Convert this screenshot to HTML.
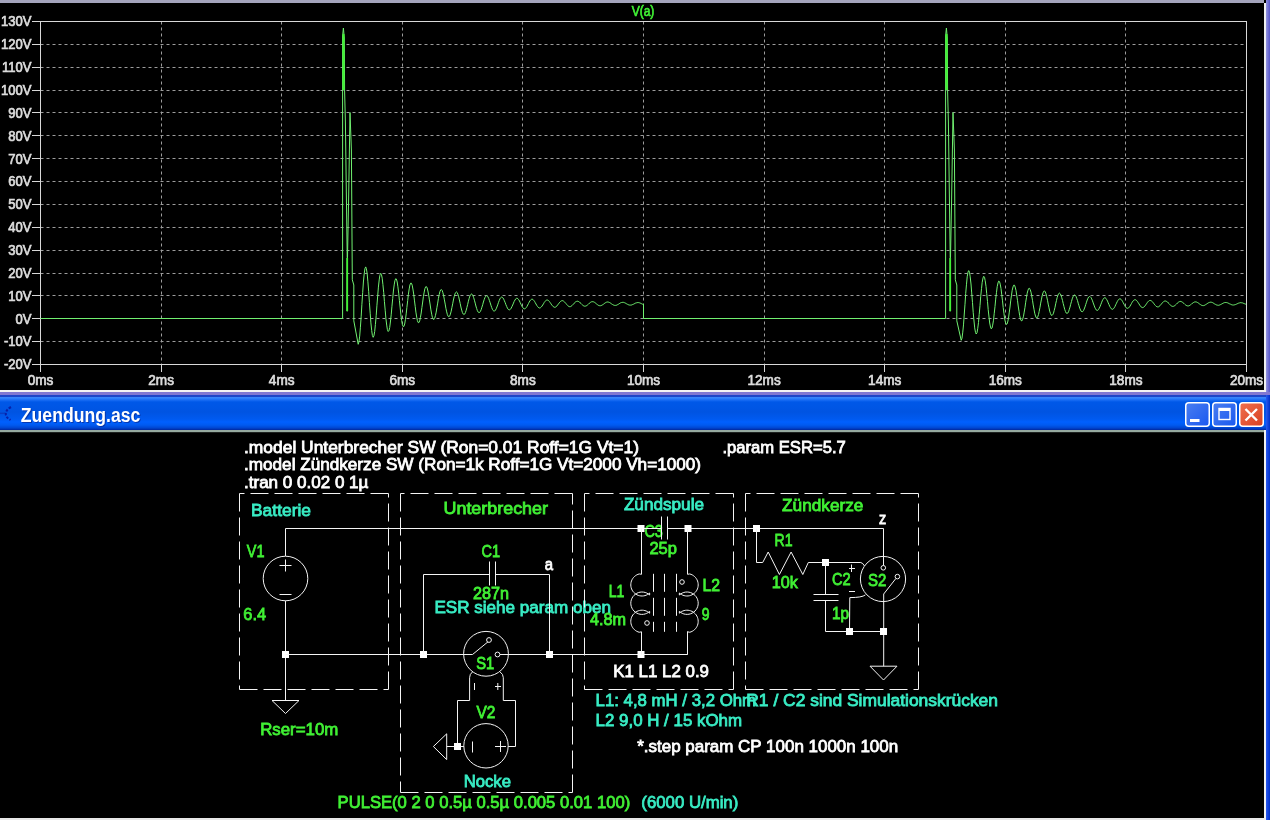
<!DOCTYPE html>
<html><head><meta charset="utf-8"><style>
html,body{margin:0;padding:0;background:#000;width:1270px;height:820px;overflow:hidden}
svg{display:block;position:absolute;left:0;top:0;will-change:transform}
.ax{font-family:"Liberation Sans",sans-serif;font-size:14px;fill:#dcdcdc;stroke:#dcdcdc;stroke-width:0.7px}
.st{font-family:"Liberation Sans",sans-serif;font-weight:normal;stroke-width:0.8px}
.tt{font-family:"Liberation Sans",sans-serif;font-weight:bold;font-size:19.5px;fill:#fff}
</style></head><body>
<svg width="1270" height="820" viewBox="0 0 1270 820">
<defs>
<linearGradient id="tbar" x1="0" y1="0" x2="0" y2="1">
<stop offset="0" stop-color="#1e46c8"/><stop offset="0.045" stop-color="#1e46c8"/><stop offset="0.075" stop-color="#3c8cff"/><stop offset="0.11" stop-color="#2878fa"/><stop offset="0.2" stop-color="#0058e8"/><stop offset="0.49" stop-color="#0054e2"/><stop offset="0.69" stop-color="#005af0"/><stop offset="0.77" stop-color="#0060ff"/><stop offset="0.86" stop-color="#005af0"/><stop offset="0.94" stop-color="#0046d2"/><stop offset="1" stop-color="#0028a0"/>
</linearGradient>
<linearGradient id="rstrip" x1="0" y1="0" x2="1" y2="0"><stop offset="0" stop-color="#9494e0"/><stop offset="1" stop-color="#5656c8"/></linearGradient>
<linearGradient id="rstrip2" x1="0" y1="0" x2="1" y2="0"><stop offset="0" stop-color="#2858f0"/><stop offset="1" stop-color="#0030c8"/></linearGradient>
<linearGradient id="btnb" x1="0" y1="0" x2="1" y2="1"><stop offset="0" stop-color="#4a7ef0"/><stop offset="1" stop-color="#1a58f0"/></linearGradient>
<linearGradient id="btnr" x1="0" y1="0" x2="1" y2="1"><stop offset="0" stop-color="#f07050"/><stop offset="1" stop-color="#d84020"/></linearGradient>
</defs>
<rect x="0" y="0" width="1270" height="820" fill="#000"/>
<rect x="0" y="0" width="1264" height="3" fill="#a4a4bc"/>
<rect x="1264" y="3" width="2" height="389" fill="#f0f0f0"/>
<rect x="1266" y="0" width="4" height="395" fill="url(#rstrip)"/>
<rect x="0" y="390" width="1266" height="2" fill="#f4f4f4"/>
<rect x="0" y="392" width="1270" height="3" fill="#8278d2"/>
<rect x="0" y="395" width="1270" height="35" fill="url(#tbar)"/>
<rect x="0" y="430" width="1266" height="2.2" fill="#96aaa0"/>
<rect x="1264" y="430" width="2" height="390" fill="#f0f0f0"/>
<rect x="1266" y="395" width="4" height="425" fill="url(#rstrip2)"/>
<rect x="0" y="818" width="1266" height="2" fill="#e8e8e8"/>
<line x1="40.5" y1="341.5" x2="1246.5" y2="341.5" stroke="#9c9c9c" stroke-width="1" stroke-dasharray="3 3"/>
<line x1="40.5" y1="318.5" x2="1246.5" y2="318.5" stroke="#9c9c9c" stroke-width="1" stroke-dasharray="3 3"/>
<line x1="40.5" y1="295.5" x2="1246.5" y2="295.5" stroke="#9c9c9c" stroke-width="1" stroke-dasharray="3 3"/>
<line x1="40.5" y1="273.5" x2="1246.5" y2="273.5" stroke="#9c9c9c" stroke-width="1" stroke-dasharray="3 3"/>
<line x1="40.5" y1="250.5" x2="1246.5" y2="250.5" stroke="#9c9c9c" stroke-width="1" stroke-dasharray="3 3"/>
<line x1="40.5" y1="227.5" x2="1246.5" y2="227.5" stroke="#9c9c9c" stroke-width="1" stroke-dasharray="3 3"/>
<line x1="40.5" y1="204.5" x2="1246.5" y2="204.5" stroke="#9c9c9c" stroke-width="1" stroke-dasharray="3 3"/>
<line x1="40.5" y1="181.5" x2="1246.5" y2="181.5" stroke="#9c9c9c" stroke-width="1" stroke-dasharray="3 3"/>
<line x1="40.5" y1="158.5" x2="1246.5" y2="158.5" stroke="#9c9c9c" stroke-width="1" stroke-dasharray="3 3"/>
<line x1="40.5" y1="135.5" x2="1246.5" y2="135.5" stroke="#9c9c9c" stroke-width="1" stroke-dasharray="3 3"/>
<line x1="40.5" y1="112.5" x2="1246.5" y2="112.5" stroke="#9c9c9c" stroke-width="1" stroke-dasharray="3 3"/>
<line x1="40.5" y1="90.5" x2="1246.5" y2="90.5" stroke="#9c9c9c" stroke-width="1" stroke-dasharray="3 3"/>
<line x1="40.5" y1="67.5" x2="1246.5" y2="67.5" stroke="#9c9c9c" stroke-width="1" stroke-dasharray="3 3"/>
<line x1="40.5" y1="44.5" x2="1246.5" y2="44.5" stroke="#9c9c9c" stroke-width="1" stroke-dasharray="3 3"/>
<line x1="161.5" y1="21.5" x2="161.5" y2="364.5" stroke="#9c9c9c" stroke-width="1" stroke-dasharray="3 3"/>
<line x1="281.5" y1="21.5" x2="281.5" y2="364.5" stroke="#9c9c9c" stroke-width="1" stroke-dasharray="3 3"/>
<line x1="402.5" y1="21.5" x2="402.5" y2="364.5" stroke="#9c9c9c" stroke-width="1" stroke-dasharray="3 3"/>
<line x1="522.5" y1="21.5" x2="522.5" y2="364.5" stroke="#9c9c9c" stroke-width="1" stroke-dasharray="3 3"/>
<line x1="643.5" y1="21.5" x2="643.5" y2="364.5" stroke="#9c9c9c" stroke-width="1" stroke-dasharray="3 3"/>
<line x1="764.5" y1="21.5" x2="764.5" y2="364.5" stroke="#9c9c9c" stroke-width="1" stroke-dasharray="3 3"/>
<line x1="884.5" y1="21.5" x2="884.5" y2="364.5" stroke="#9c9c9c" stroke-width="1" stroke-dasharray="3 3"/>
<line x1="1005.5" y1="21.5" x2="1005.5" y2="364.5" stroke="#9c9c9c" stroke-width="1" stroke-dasharray="3 3"/>
<line x1="1125.5" y1="21.5" x2="1125.5" y2="364.5" stroke="#9c9c9c" stroke-width="1" stroke-dasharray="3 3"/>
<rect x="40.5" y="21.5" width="1206.0" height="343.0" fill="none" stroke="#d8d8d8" stroke-width="1"/>
<line x1="32" y1="364.5" x2="40.5" y2="364.5" stroke="#d8d8d8" stroke-width="1"/>
<text x="31.5" y="369.3" text-anchor="end" class="ax" textLength="27.5" lengthAdjust="spacingAndGlyphs">-20V</text>
<line x1="32" y1="341.5" x2="40.5" y2="341.5" stroke="#d8d8d8" stroke-width="1"/>
<text x="31.5" y="346.4" text-anchor="end" class="ax" textLength="27.5" lengthAdjust="spacingAndGlyphs">-10V</text>
<line x1="32" y1="318.5" x2="40.5" y2="318.5" stroke="#d8d8d8" stroke-width="1"/>
<text x="31.5" y="323.6" text-anchor="end" class="ax" textLength="15.9" lengthAdjust="spacingAndGlyphs">0V</text>
<line x1="32" y1="295.5" x2="40.5" y2="295.5" stroke="#d8d8d8" stroke-width="1"/>
<text x="31.5" y="300.7" text-anchor="end" class="ax" textLength="23.2" lengthAdjust="spacingAndGlyphs">10V</text>
<line x1="32" y1="273.5" x2="40.5" y2="273.5" stroke="#d8d8d8" stroke-width="1"/>
<text x="31.5" y="277.8" text-anchor="end" class="ax" textLength="23.2" lengthAdjust="spacingAndGlyphs">20V</text>
<line x1="32" y1="250.5" x2="40.5" y2="250.5" stroke="#d8d8d8" stroke-width="1"/>
<text x="31.5" y="255.0" text-anchor="end" class="ax" textLength="23.2" lengthAdjust="spacingAndGlyphs">30V</text>
<line x1="32" y1="227.5" x2="40.5" y2="227.5" stroke="#d8d8d8" stroke-width="1"/>
<text x="31.5" y="232.1" text-anchor="end" class="ax" textLength="23.2" lengthAdjust="spacingAndGlyphs">40V</text>
<line x1="32" y1="204.5" x2="40.5" y2="204.5" stroke="#d8d8d8" stroke-width="1"/>
<text x="31.5" y="209.2" text-anchor="end" class="ax" textLength="23.2" lengthAdjust="spacingAndGlyphs">50V</text>
<line x1="32" y1="181.5" x2="40.5" y2="181.5" stroke="#d8d8d8" stroke-width="1"/>
<text x="31.5" y="186.4" text-anchor="end" class="ax" textLength="23.2" lengthAdjust="spacingAndGlyphs">60V</text>
<line x1="32" y1="158.5" x2="40.5" y2="158.5" stroke="#d8d8d8" stroke-width="1"/>
<text x="31.5" y="163.5" text-anchor="end" class="ax" textLength="23.2" lengthAdjust="spacingAndGlyphs">70V</text>
<line x1="32" y1="135.5" x2="40.5" y2="135.5" stroke="#d8d8d8" stroke-width="1"/>
<text x="31.5" y="140.6" text-anchor="end" class="ax" textLength="23.2" lengthAdjust="spacingAndGlyphs">80V</text>
<line x1="32" y1="112.5" x2="40.5" y2="112.5" stroke="#d8d8d8" stroke-width="1"/>
<text x="31.5" y="117.8" text-anchor="end" class="ax" textLength="23.2" lengthAdjust="spacingAndGlyphs">90V</text>
<line x1="32" y1="90.5" x2="40.5" y2="90.5" stroke="#d8d8d8" stroke-width="1"/>
<text x="31.5" y="94.9" text-anchor="end" class="ax" textLength="30.4" lengthAdjust="spacingAndGlyphs">100V</text>
<line x1="32" y1="67.5" x2="40.5" y2="67.5" stroke="#d8d8d8" stroke-width="1"/>
<text x="31.5" y="72.0" text-anchor="end" class="ax" textLength="29.4" lengthAdjust="spacingAndGlyphs">110V</text>
<line x1="32" y1="44.5" x2="40.5" y2="44.5" stroke="#d8d8d8" stroke-width="1"/>
<text x="31.5" y="49.2" text-anchor="end" class="ax" textLength="30.4" lengthAdjust="spacingAndGlyphs">120V</text>
<line x1="32" y1="21.5" x2="40.5" y2="21.5" stroke="#d8d8d8" stroke-width="1"/>
<text x="31.5" y="26.3" text-anchor="end" class="ax" textLength="30.4" lengthAdjust="spacingAndGlyphs">130V</text>
<line x1="40.5" y1="364.5" x2="40.5" y2="372" stroke="#d8d8d8" stroke-width="1"/>
<text x="40.5" y="385" text-anchor="middle" class="ax" textLength="25.7" lengthAdjust="spacingAndGlyphs">0ms</text>
<line x1="161.5" y1="364.5" x2="161.5" y2="372" stroke="#d8d8d8" stroke-width="1"/>
<text x="161.1" y="385" text-anchor="middle" class="ax" textLength="25.7" lengthAdjust="spacingAndGlyphs">2ms</text>
<line x1="281.5" y1="364.5" x2="281.5" y2="372" stroke="#d8d8d8" stroke-width="1"/>
<text x="281.7" y="385" text-anchor="middle" class="ax" textLength="25.7" lengthAdjust="spacingAndGlyphs">4ms</text>
<line x1="402.5" y1="364.5" x2="402.5" y2="372" stroke="#d8d8d8" stroke-width="1"/>
<text x="402.3" y="385" text-anchor="middle" class="ax" textLength="25.7" lengthAdjust="spacingAndGlyphs">6ms</text>
<line x1="522.5" y1="364.5" x2="522.5" y2="372" stroke="#d8d8d8" stroke-width="1"/>
<text x="522.9" y="385" text-anchor="middle" class="ax" textLength="25.7" lengthAdjust="spacingAndGlyphs">8ms</text>
<line x1="643.5" y1="364.5" x2="643.5" y2="372" stroke="#d8d8d8" stroke-width="1"/>
<text x="643.5" y="385" text-anchor="middle" class="ax" textLength="33.2" lengthAdjust="spacingAndGlyphs">10ms</text>
<line x1="764.5" y1="364.5" x2="764.5" y2="372" stroke="#d8d8d8" stroke-width="1"/>
<text x="764.1" y="385" text-anchor="middle" class="ax" textLength="33.2" lengthAdjust="spacingAndGlyphs">12ms</text>
<line x1="884.5" y1="364.5" x2="884.5" y2="372" stroke="#d8d8d8" stroke-width="1"/>
<text x="884.7" y="385" text-anchor="middle" class="ax" textLength="33.2" lengthAdjust="spacingAndGlyphs">14ms</text>
<line x1="1005.5" y1="364.5" x2="1005.5" y2="372" stroke="#d8d8d8" stroke-width="1"/>
<text x="1005.3" y="385" text-anchor="middle" class="ax" textLength="33.2" lengthAdjust="spacingAndGlyphs">16ms</text>
<line x1="1125.5" y1="364.5" x2="1125.5" y2="372" stroke="#d8d8d8" stroke-width="1"/>
<text x="1125.9" y="385" text-anchor="middle" class="ax" textLength="33.2" lengthAdjust="spacingAndGlyphs">18ms</text>
<line x1="1246.5" y1="364.5" x2="1246.5" y2="372" stroke="#d8d8d8" stroke-width="1"/>
<text x="1246.5" y="385" text-anchor="middle" class="ax" textLength="33.2" lengthAdjust="spacingAndGlyphs">20ms</text>
<text x="643" y="16" text-anchor="middle" class="ax" style="fill:#40f034;stroke:#40f034" textLength="22.7" lengthAdjust="spacingAndGlyphs">V(a)</text>
<path d="M40.5,318.5 L342.6,318.5 L342.6,36.0 L343.4,28.0 L344.3,38.0 L344.6,91.0 L345.4,122.0 L347.2,257.8 L347.2,311.3 L347.5,257.8 L348.6,200.0 L350.0,112.5 L351.4,150.0 L352.3,279.8 L353.8,285.0 L353.8,320.8 L358.2,344.3 L358.9,342.0 L359.7,336.1 L360.4,327.2 L361.2,316.2 L361.9,304.3 L362.7,292.5 L363.4,282.0 L364.2,273.8 L364.9,268.7 L365.7,266.9 L366.4,268.8 L367.2,273.9 L367.9,281.8 L368.7,291.7 L369.4,302.5 L370.2,313.2 L370.9,322.9 L371.7,330.5 L372.4,335.5 L373.2,337.3 L373.9,335.9 L374.7,331.5 L375.4,324.5 L376.2,315.6 L376.9,305.8 L377.7,296.0 L378.4,287.1 L379.2,279.9 L379.9,275.2 L380.7,273.3 L381.4,274.4 L382.2,278.2 L382.9,284.4 L383.7,292.4 L384.4,301.3 L385.2,310.2 L385.9,318.4 L386.7,325.1 L387.4,329.6 L388.2,331.5 L388.9,330.8 L389.7,327.5 L390.4,322.0 L391.2,314.8 L391.9,306.8 L392.7,298.6 L393.4,291.0 L394.2,284.9 L394.9,280.6 L395.7,278.7 L396.4,279.1 L397.2,282.0 L397.9,286.8 L398.7,293.2 L399.4,300.5 L400.2,308.0 L400.9,314.9 L401.7,320.6 L402.4,324.7 L403.2,326.6 L403.9,326.4 L404.7,324.0 L405.4,319.7 L406.2,313.9 L406.9,307.4 L407.7,300.5 L408.4,294.2 L409.2,288.9 L409.9,285.0 L410.7,283.1 L411.4,283.2 L412.2,285.2 L412.9,289.0 L413.7,294.1 L414.4,300.1 L415.2,306.3 L415.9,312.1 L416.7,317.1 L417.4,320.6 L418.2,322.6 L418.9,322.6 L419.7,320.9 L420.4,317.6 L421.2,313.0 L421.9,307.6 L422.7,302.0 L423.4,296.6 L424.2,292.1 L424.9,288.7 L425.7,286.8 L426.4,286.6 L427.2,288.0 L427.9,291.0 L428.7,295.1 L429.4,299.9 L430.2,305.0 L430.9,309.9 L431.7,314.2 L432.4,317.4 L433.2,319.2 L433.9,319.5 L434.7,318.3 L435.4,315.7 L436.2,312.1 L436.9,307.7 L437.7,303.1 L438.4,298.5 L439.2,294.6 L439.9,291.7 L440.7,289.9 L441.4,289.5 L442.2,290.5 L442.9,292.7 L443.7,296.0 L444.4,299.9 L445.2,304.1 L445.9,308.3 L446.7,311.9 L447.4,314.7 L448.2,316.4 L448.9,316.8 L449.7,316.0 L450.4,314.1 L451.2,311.2 L451.9,307.6 L452.7,303.8 L453.4,300.0 L454.2,296.7 L454.9,294.1 L455.7,292.5 L456.4,291.9 L457.2,292.6 L457.9,294.3 L458.7,296.8 L459.4,300.0 L460.2,303.5 L460.9,307.0 L461.7,310.1 L462.4,312.5 L463.2,314.0 L463.9,314.6 L464.7,314.1 L465.4,312.6 L466.2,310.3 L466.9,307.5 L467.7,304.3 L468.4,301.2 L469.2,298.3 L469.9,296.0 L470.7,294.6 L471.4,294.0 L472.2,294.4 L472.9,295.6 L473.7,297.7 L474.4,300.2 L475.2,303.1 L475.9,306.0 L476.7,308.6 L477.4,310.7 L478.2,312.1 L478.9,312.7 L479.7,312.4 L480.4,311.4 L481.2,309.6 L481.9,307.2 L482.7,304.7 L483.4,302.0 L484.2,299.6 L484.9,297.6 L485.7,296.3 L486.4,295.7 L487.2,295.9 L487.9,296.8 L488.7,298.4 L489.4,300.5 L490.2,302.8 L490.9,305.2 L491.7,307.5 L492.4,309.3 L493.2,310.5 L493.9,311.2 L494.7,311.0 L495.4,310.2 L496.2,308.8 L496.9,307.0 L497.7,304.9 L498.4,302.7 L499.2,300.6 L499.9,298.9 L500.7,297.7 L501.4,297.1 L502.2,297.2 L502.9,297.9 L503.7,299.1 L504.4,300.8 L505.2,302.7 L505.9,304.7 L506.7,306.5 L507.4,308.1 L508.2,309.3 L508.9,309.8 L509.7,309.8 L510.4,309.3 L511.2,308.2 L511.9,306.7 L512.7,305.0 L513.5,303.1 L514.2,301.4 L515.0,300.0 L515.7,298.9 L516.5,298.3 L517.2,298.3 L518.0,298.8 L518.7,299.7 L519.5,301.0 L520.2,302.6 L521.0,304.3 L521.7,305.8 L522.5,307.2 L523.2,308.2 L524.0,308.8 L524.7,308.8 L525.5,308.4 L526.2,307.6 L527.0,306.4 L527.7,305.0 L528.5,303.5 L529.2,302.1 L530.0,300.8 L530.7,299.9 L531.5,299.3 L532.2,299.2 L533.0,299.5 L533.7,300.3 L534.5,301.3 L535.2,302.6 L536.0,304.0 L536.7,305.3 L537.5,306.4 L538.2,307.3 L539.0,307.9 L539.7,308.0 L540.5,307.7 L541.2,307.1 L542.0,306.1 L542.7,305.0 L543.5,303.8 L544.2,302.5 L545.0,301.5 L545.7,300.6 L546.5,300.1 L547.2,300.0 L548.0,300.2 L548.7,300.8 L549.5,301.6 L550.2,302.6 L551.0,303.8 L551.7,304.9 L552.5,305.8 L553.2,306.6 L554.0,307.1 L554.7,307.3 L555.5,307.1 L556.2,306.6 L557.0,305.9 L557.7,304.9 L558.5,303.9 L559.2,302.9 L560.0,302.0 L560.7,301.3 L561.5,300.8 L562.2,300.6 L563.0,300.8 L563.7,301.2 L564.5,301.9 L565.2,302.7 L566.0,303.6 L566.7,304.5 L567.5,305.4 L568.2,306.0 L569.0,306.5 L569.7,306.7 L570.5,306.6 L571.2,306.2 L572.0,305.6 L572.7,304.9 L573.5,304.0 L574.2,303.2 L575.0,302.4 L575.7,301.8 L576.5,301.4 L577.2,301.2 L578.0,301.3 L578.7,301.6 L579.5,302.1 L580.2,302.8 L581.0,303.5 L581.7,304.3 L582.5,305.0 L583.2,305.6 L584.0,306.0 L584.7,306.2 L585.5,306.1 L586.2,305.9 L587.0,305.4 L587.7,304.8 L588.5,304.1 L589.2,303.4 L590.0,302.8 L590.7,302.2 L591.5,301.8 L592.2,301.7 L593.0,301.7 L593.7,301.9 L594.5,302.3 L595.2,302.8 L596.0,303.5 L596.7,304.1 L597.5,304.7 L598.2,305.2 L599.0,305.6 L599.7,305.7 L600.5,305.7 L601.2,305.5 L602.0,305.2 L602.7,304.7 L603.5,304.2 L604.2,303.6 L605.0,303.0 L605.7,302.6 L606.5,302.2 L607.2,302.0 L608.0,302.0 L608.7,302.2 L609.5,302.5 L610.2,302.9 L611.0,303.4 L611.7,304.0 L612.5,304.5 L613.2,304.9 L614.0,305.2 L614.7,305.4 L615.5,305.4 L616.2,305.3 L617.0,305.0 L617.7,304.6 L618.5,304.2 L619.2,303.7 L620.0,303.2 L620.7,302.8 L621.5,302.5 L622.2,302.4 L623.0,302.3 L623.7,302.4 L624.5,302.7 L625.2,303.0 L626.0,303.4 L626.7,303.9 L627.5,304.3 L628.2,304.7 L629.0,304.9 L629.7,305.1 L630.5,305.1 L631.2,305.1 L632.0,304.8 L632.7,304.5 L633.5,304.2 L634.2,303.8 L635.0,303.4 L635.7,303.0 L636.5,302.8 L637.2,302.6 L638.0,302.6 L638.7,302.6 L639.5,302.8 L640.2,303.1 L641.0,303.4 L641.7,303.8 L642.5,304.2 L643.5,304.2 L643.5,318.5 L945.6,318.5 L945.6,36.0 L946.4,28.0 L947.3,38.0 L947.6,91.0 L948.4,122.0 L950.2,257.8 L950.2,311.3 L950.5,257.8 L951.6,200.0 L953.0,112.5 L954.4,150.0 L955.3,279.8 L956.8,285.0 L956.8,320.8 L961.2,340.3 L962.0,338.2 L962.7,332.9 L963.5,324.9 L964.2,315.0 L965.0,304.2 L965.7,293.6 L966.5,284.2 L967.2,276.8 L968.0,272.1 L968.7,270.6 L969.5,272.2 L970.2,276.9 L971.0,284.0 L971.7,292.9 L972.5,302.6 L973.2,312.3 L974.0,321.0 L974.7,327.9 L975.5,332.4 L976.2,334.0 L977.0,332.8 L977.7,328.7 L978.5,322.4 L979.2,314.4 L980.0,305.6 L980.7,296.7 L981.5,288.7 L982.2,282.3 L983.0,278.0 L983.7,276.3 L984.5,277.3 L985.2,280.7 L986.0,286.3 L986.7,293.5 L987.5,301.5 L988.2,309.6 L989.0,317.0 L989.7,323.0 L990.5,327.0 L991.2,328.8 L992.0,328.1 L992.7,325.1 L993.5,320.2 L994.2,313.7 L995.0,306.5 L995.7,299.1 L996.5,292.3 L997.2,286.7 L998.0,282.9 L998.7,281.1 L999.5,281.6 L1000.2,284.1 L1001.0,288.5 L1001.7,294.3 L1002.5,300.8 L1003.2,307.5 L1004.0,313.8 L1004.7,319.0 L1005.5,322.6 L1006.2,324.4 L1007.0,324.1 L1007.7,322.0 L1008.5,318.1 L1009.2,312.9 L1010.0,307.0 L1010.7,300.9 L1011.5,295.1 L1012.2,290.3 L1013.0,286.9 L1013.7,285.2 L1014.5,285.2 L1015.2,287.1 L1016.0,290.5 L1016.7,295.1 L1017.5,300.4 L1018.2,306.0 L1019.0,311.3 L1019.7,315.7 L1020.5,319.0 L1021.2,320.7 L1022.0,320.8 L1022.7,319.2 L1023.5,316.2 L1024.2,312.1 L1025.0,307.3 L1025.7,302.2 L1026.5,297.3 L1027.2,293.2 L1028.0,290.2 L1028.7,288.5 L1029.5,288.3 L1030.2,289.6 L1031.0,292.2 L1031.7,295.9 L1032.5,300.3 L1033.2,304.9 L1034.0,309.3 L1034.7,313.2 L1035.5,316.0 L1036.2,317.7 L1037.0,317.9 L1037.7,316.9 L1038.5,314.6 L1039.2,311.3 L1040.0,307.3 L1040.7,303.1 L1041.5,299.1 L1042.2,295.5 L1043.0,292.9 L1043.7,291.3 L1044.5,290.9 L1045.2,291.8 L1046.0,293.8 L1046.7,296.7 L1047.5,300.3 L1048.2,304.1 L1049.0,307.8 L1049.7,311.1 L1050.5,313.6 L1051.2,315.1 L1052.0,315.5 L1052.7,314.8 L1053.5,313.1 L1054.2,310.5 L1055.0,307.3 L1055.7,303.8 L1056.5,300.4 L1057.2,297.4 L1058.0,295.0 L1058.7,293.6 L1059.5,293.1 L1060.2,293.7 L1061.0,295.2 L1061.7,297.5 L1062.5,300.4 L1063.2,303.5 L1064.0,306.7 L1064.7,309.4 L1065.5,311.6 L1066.2,313.0 L1067.0,313.5 L1067.7,313.1 L1068.5,311.8 L1069.2,309.7 L1070.0,307.1 L1070.7,304.3 L1071.5,301.4 L1072.2,298.9 L1073.0,296.8 L1073.7,295.5 L1074.5,295.0 L1075.2,295.3 L1076.0,296.4 L1076.7,298.3 L1077.5,300.6 L1078.2,303.2 L1079.0,305.8 L1079.7,308.1 L1080.5,310.0 L1081.2,311.3 L1082.0,311.8 L1082.7,311.6 L1083.5,310.6 L1084.2,309.0 L1085.0,306.9 L1085.7,304.6 L1086.5,302.2 L1087.2,300.0 L1088.0,298.2 L1088.7,297.0 L1089.5,296.5 L1090.2,296.7 L1091.0,297.5 L1091.7,298.9 L1092.5,300.8 L1093.2,302.9 L1094.0,305.1 L1094.7,307.1 L1095.5,308.7 L1096.2,309.9 L1097.0,310.4 L1097.7,310.3 L1098.5,309.6 L1099.2,308.3 L1100.0,306.7 L1100.7,304.8 L1101.5,302.8 L1102.2,300.9 L1103.0,299.4 L1103.7,298.3 L1104.5,297.8 L1105.2,297.8 L1106.0,298.4 L1106.7,299.6 L1107.5,301.1 L1108.2,302.8 L1109.0,304.6 L1109.7,306.3 L1110.5,307.7 L1111.2,308.7 L1112.0,309.2 L1112.7,309.3 L1113.5,308.7 L1114.2,307.8 L1115.0,306.4 L1115.7,304.8 L1116.5,303.2 L1117.2,301.7 L1118.0,300.3 L1118.7,299.4 L1119.5,298.9 L1120.2,298.8 L1121.0,299.3 L1121.7,300.1 L1122.5,301.3 L1123.2,302.7 L1124.0,304.2 L1124.7,305.6 L1125.5,306.9 L1126.2,307.8 L1127.0,308.3 L1127.7,308.3 L1128.5,308.0 L1129.2,307.2 L1130.0,306.2 L1130.7,304.9 L1131.5,303.5 L1132.2,302.2 L1133.0,301.1 L1133.7,300.3 L1134.5,299.8 L1135.2,299.7 L1136.0,300.0 L1136.7,300.6 L1137.5,301.6 L1138.2,302.7 L1139.0,303.9 L1139.7,305.1 L1140.5,306.2 L1141.2,307.0 L1142.0,307.5 L1142.7,307.6 L1143.5,307.3 L1144.2,306.8 L1145.0,305.9 L1145.7,304.9 L1146.5,303.8 L1147.2,302.7 L1148.0,301.7 L1148.7,301.0 L1149.5,300.5 L1150.2,300.4 L1151.0,300.6 L1151.7,301.1 L1152.5,301.8 L1153.2,302.7 L1154.0,303.8 L1154.7,304.8 L1155.5,305.6 L1156.2,306.3 L1157.0,306.8 L1157.7,306.9 L1158.5,306.8 L1159.2,306.3 L1160.0,305.7 L1160.7,304.8 L1161.5,303.9 L1162.2,303.0 L1163.0,302.2 L1163.7,301.5 L1164.5,301.1 L1165.2,301.0 L1166.0,301.1 L1166.7,301.5 L1167.5,302.0 L1168.2,302.8 L1169.0,303.6 L1169.7,304.5 L1170.5,305.2 L1171.2,305.8 L1172.0,306.2 L1172.7,306.4 L1173.5,306.3 L1174.2,306.0 L1175.0,305.4 L1175.7,304.8 L1176.5,304.0 L1177.2,303.3 L1178.0,302.6 L1178.7,302.0 L1179.5,301.6 L1180.2,301.4 L1181.0,301.5 L1181.7,301.8 L1182.5,302.3 L1183.2,302.9 L1184.0,303.5 L1184.7,304.2 L1185.5,304.9 L1186.2,305.4 L1187.0,305.8 L1187.7,305.9 L1188.5,305.9 L1189.2,305.7 L1190.0,305.2 L1190.7,304.7 L1191.5,304.1 L1192.2,303.4 L1193.0,302.9 L1193.7,302.4 L1194.5,302.0 L1195.2,301.9 L1196.0,301.9 L1196.7,302.1 L1197.5,302.5 L1198.2,302.9 L1199.0,303.5 L1199.7,304.1 L1200.5,304.6 L1201.2,305.1 L1202.0,305.4 L1202.7,305.6 L1203.5,305.6 L1204.2,305.4 L1205.0,305.1 L1205.7,304.6 L1206.5,304.1 L1207.2,303.6 L1208.0,303.1 L1208.7,302.7 L1209.5,302.4 L1210.2,302.2 L1211.0,302.2 L1211.7,302.3 L1212.5,302.6 L1213.2,303.0 L1214.0,303.5 L1214.7,304.0 L1215.5,304.4 L1216.2,304.8 L1217.0,305.1 L1217.7,305.2 L1218.5,305.3 L1219.2,305.1 L1220.0,304.9 L1220.7,304.5 L1221.5,304.1 L1222.2,303.7 L1223.0,303.3 L1223.7,302.9 L1224.5,302.6 L1225.2,302.5 L1226.0,302.5 L1226.7,302.6 L1227.5,302.8 L1228.2,303.1 L1229.0,303.5 L1229.7,303.9 L1230.5,304.2 L1231.2,304.6 L1232.0,304.8 L1232.7,305.0 L1233.5,305.0 L1234.2,304.9 L1235.0,304.7 L1235.7,304.5 L1236.5,304.1 L1237.2,303.8 L1238.0,303.4 L1238.7,303.1 L1239.5,302.9 L1240.2,302.7 L1241.0,302.7 L1241.7,302.8 L1242.5,302.9 L1243.2,303.2 L1244.0,303.5 L1244.7,303.8 L1245.5,304.1 L1246.0,304.1" fill="none" stroke="#70f070" stroke-width="1" stroke-linejoin="round"/>
<path d="M343.5,34 L343.6,90" stroke="#40f034" stroke-width="2"/>
<path d="M347.2,258 L347.2,311" stroke="#40f034" stroke-width="1.8"/>
<path d="M946.5,34 L946.6,90" stroke="#40f034" stroke-width="2"/>
<path d="M950.2,258 L950.2,311" stroke="#40f034" stroke-width="1.8"/>
<text x="21.8" y="423.2" class="tt" style="fill:#0a2890;opacity:0.7" textLength="119.6" lengthAdjust="spacingAndGlyphs">Zuendung.asc</text>
<text x="20.8" y="422.2" class="tt" textLength="119.6" lengthAdjust="spacingAndGlyphs">Zuendung.asc</text>
<path d="M11,407 Q5.5,410 5.8,414.5 Q6,417.5 10.5,420" fill="none" stroke="#0818a0" stroke-width="2" stroke-dasharray="2.5 1.5" opacity="0.85"/>
<path d="M0,413.3 L5,413.3" stroke="#0a30b0" stroke-width="1.5" opacity="0.6"/>
<rect x="1185.75" y="402.75" width="23.5" height="23.5" rx="3" fill="url(#btnb)" stroke="#fff" stroke-width="1.5"/>
<rect x="1212.75" y="402.75" width="23.5" height="23.5" rx="3" fill="url(#btnb)" stroke="#fff" stroke-width="1.5"/>
<rect x="1239.75" y="402.75" width="23.5" height="23.5" rx="3" fill="url(#btnr)" stroke="#fff" stroke-width="1.5"/>
<rect x="1190" y="419" width="9.5" height="3" fill="#fff"/>
<rect x="1219" y="408.5" width="11" height="11" fill="none" stroke="#fff" stroke-width="1.4"/><rect x="1219" y="408.5" width="11" height="2.5" fill="#fff"/>
<path d="M1245.5,409 L1257,420.5 M1257,409 L1245.5,420.5" stroke="#fff" stroke-width="2.4"/>
<text x="244" y="452.6" fill="#ffffff" stroke="#ffffff" class="st" style="font-size:16.8px" textLength="395" lengthAdjust="spacingAndGlyphs">.model Unterbrecher SW (Ron=0.01 Roff=1G Vt=1)</text>
<text x="244" y="469.6" fill="#ffffff" stroke="#ffffff" class="st" style="font-size:16.8px" textLength="457" lengthAdjust="spacingAndGlyphs">.model Zündkerze SW (Ron=1k Roff=1G Vt=2000 Vh=1000)</text>
<text x="244" y="487.6" fill="#ffffff" stroke="#ffffff" class="st" style="font-size:16.8px" textLength="124.4" lengthAdjust="spacingAndGlyphs">.tran 0 0.02 0 1µ</text>
<text x="722.4" y="452.7" fill="#ffffff" stroke="#ffffff" class="st" style="font-size:16.8px" textLength="123.4" lengthAdjust="spacingAndGlyphs">.param ESR=5.7</text>
<text x="251" y="515.6" fill="#38ecc4" stroke="#38ecc4" class="st" style="font-size:16.8px" textLength="60" lengthAdjust="spacingAndGlyphs">Batterie</text>
<text x="443.5" y="513.6" fill="#40f034" stroke="#40f034" class="st" style="font-size:16.8px" textLength="104.5" lengthAdjust="spacingAndGlyphs">Unterbrecher</text>
<text x="623.9" y="510.3" fill="#38ecc4" stroke="#38ecc4" class="st" style="font-size:16.8px" textLength="80.1" lengthAdjust="spacingAndGlyphs">Zündspule</text>
<text x="782.1" y="511.0" fill="#40f034" stroke="#40f034" class="st" style="font-size:16.8px" textLength="81.3" lengthAdjust="spacingAndGlyphs">Zündkerze</text>
<text x="879" y="523.7" fill="#ffffff" stroke="#ffffff" class="st" style="font-size:16.8px" textLength="7.2" lengthAdjust="spacingAndGlyphs">z</text>
<text x="246.8" y="556.6" fill="#40f034" stroke="#40f034" class="st" style="font-size:16.8px" textLength="17.6" lengthAdjust="spacingAndGlyphs">V1</text>
<text x="243.3" y="620.0" fill="#40f034" stroke="#40f034" class="st" style="font-size:16.8px" textLength="22.8" lengthAdjust="spacingAndGlyphs">6.4</text>
<text x="260.2" y="735.2" fill="#40f034" stroke="#40f034" class="st" style="font-size:16.8px" textLength="78.1" lengthAdjust="spacingAndGlyphs">Rser=10m</text>
<text x="481.4" y="557.2" fill="#40f034" stroke="#40f034" class="st" style="font-size:16.8px" textLength="18.6" lengthAdjust="spacingAndGlyphs">C1</text>
<text x="544.7" y="569.6" fill="#ffffff" stroke="#ffffff" class="st" style="font-size:16.8px" textLength="8.3" lengthAdjust="spacingAndGlyphs">a</text>
<text x="473" y="599.2" fill="#40f034" stroke="#40f034" class="st" style="font-size:16.8px" textLength="36" lengthAdjust="spacingAndGlyphs">287n</text>
<text x="434.4" y="613.2" fill="#38ecc4" stroke="#38ecc4" class="st" style="font-size:16.8px" textLength="176.6" lengthAdjust="spacingAndGlyphs">ESR siehe param oben</text>
<text x="476.3" y="668.6" fill="#40f034" stroke="#40f034" class="st" style="font-size:16.8px" textLength="18" lengthAdjust="spacingAndGlyphs">S1</text>
<text x="476.4" y="718.4" fill="#40f034" stroke="#40f034" class="st" style="font-size:16.8px" textLength="18.9" lengthAdjust="spacingAndGlyphs">V2</text>
<text x="463.7" y="786.7" fill="#38ecc4" stroke="#38ecc4" class="st" style="font-size:16.8px" textLength="47.3" lengthAdjust="spacingAndGlyphs">Nocke</text>
<text x="337.6" y="808.4" fill="#40f034" stroke="#40f034" class="st" style="font-size:16.8px" textLength="292.6" lengthAdjust="spacingAndGlyphs">PULSE(0 2 0 0.5µ 0.5µ 0.005 0.01 100)</text>
<text x="641.3" y="808.4" fill="#38ecc4" stroke="#38ecc4" class="st" style="font-size:16.8px" textLength="97" lengthAdjust="spacingAndGlyphs">(6000 U/min)</text>
<text x="644.4" y="536.5" fill="#40f034" stroke="#40f034" class="st" style="font-size:16.8px" textLength="18.5" lengthAdjust="spacingAndGlyphs">C3</text>
<text x="649.4" y="553.5" fill="#40f034" stroke="#40f034" class="st" style="font-size:16.8px" textLength="27.6" lengthAdjust="spacingAndGlyphs">25p</text>
<text x="608.8" y="596.5" fill="#40f034" stroke="#40f034" class="st" style="font-size:16.8px" textLength="15.6" lengthAdjust="spacingAndGlyphs">L1</text>
<text x="589.9" y="625.2" fill="#40f034" stroke="#40f034" class="st" style="font-size:16.8px" textLength="36.1" lengthAdjust="spacingAndGlyphs">4.8m</text>
<text x="702.4" y="590.7" fill="#40f034" stroke="#40f034" class="st" style="font-size:16.8px" textLength="17.6" lengthAdjust="spacingAndGlyphs">L2</text>
<text x="701.8" y="619.6" fill="#40f034" stroke="#40f034" class="st" style="font-size:16.8px" textLength="7.8" lengthAdjust="spacingAndGlyphs">9</text>
<text x="613.3" y="677.0" fill="#ffffff" stroke="#ffffff" class="st" style="font-size:16.8px" textLength="95.7" lengthAdjust="spacingAndGlyphs">K1 L1 L2 0.9</text>
<text x="595.6" y="705.6" fill="#38ecc4" stroke="#38ecc4" class="st" style="font-size:16.8px">L1: 4,8 mH / 3,2 Ohm</text>
<text x="746.3" y="705.6" fill="#38ecc4" stroke="#38ecc4" class="st" style="font-size:16.8px" textLength="251.7" lengthAdjust="spacingAndGlyphs">R1 / C2 sind Simulationskrücken</text>
<text x="595.6" y="725.5" fill="#38ecc4" stroke="#38ecc4" class="st" style="font-size:16.8px" textLength="146.4" lengthAdjust="spacingAndGlyphs">L2 9,0 H / 15 kOhm</text>
<text x="637.2" y="751.5" fill="#ffffff" stroke="#ffffff" class="st" style="font-size:16.8px" textLength="261" lengthAdjust="spacingAndGlyphs">*.step param CP 100n 1000n 100n</text>
<text x="774.6" y="546.1" fill="#40f034" stroke="#40f034" class="st" style="font-size:16.8px" textLength="18" lengthAdjust="spacingAndGlyphs">R1</text>
<text x="771.7" y="588.0" fill="#40f034" stroke="#40f034" class="st" style="font-size:16.8px" textLength="26.1" lengthAdjust="spacingAndGlyphs">10k</text>
<text x="832" y="584.6" fill="#40f034" stroke="#40f034" class="st" style="font-size:16.8px" textLength="18.7" lengthAdjust="spacingAndGlyphs">C2</text>
<text x="868.1" y="585.5" fill="#40f034" stroke="#40f034" class="st" style="font-size:16.8px" textLength="18.3" lengthAdjust="spacingAndGlyphs">S2</text>
<text x="832" y="619.4" fill="#40f034" stroke="#40f034" class="st" style="font-size:16.8px" textLength="17" lengthAdjust="spacingAndGlyphs">1p</text>
<g fill="none" stroke="#f4f4f4" stroke-width="1">
<line x1="388.5" y1="493.5" x2="239.5" y2="493.5" stroke-dasharray="18 6"/>
<line x1="239.5" y1="493.5" x2="239.5" y2="689.5" stroke-dasharray="18 6"/>
<line x1="239.5" y1="689.5" x2="388.5" y2="689.5" stroke-dasharray="18 6"/>
<line x1="388.5" y1="689.5" x2="388.5" y2="493.5" stroke-dasharray="18 6"/>
<line x1="572.5" y1="493.5" x2="400.5" y2="493.5" stroke-dasharray="18 6"/>
<line x1="400.5" y1="493.5" x2="400.5" y2="792.5" stroke-dasharray="18 6"/>
<line x1="400.5" y1="792.5" x2="572.5" y2="792.5" stroke-dasharray="18 6"/>
<line x1="572.5" y1="792.5" x2="572.5" y2="493.5" stroke-dasharray="18 6"/>
<line x1="733.5" y1="493.5" x2="584.5" y2="493.5" stroke-dasharray="18 6"/>
<line x1="584.5" y1="493.5" x2="584.5" y2="689.5" stroke-dasharray="18 6"/>
<line x1="584.5" y1="689.5" x2="733.5" y2="689.5" stroke-dasharray="18 6"/>
<line x1="733.5" y1="689.5" x2="733.5" y2="493.5" stroke-dasharray="18 6"/>
<line x1="918.5" y1="493.5" x2="745.5" y2="493.5" stroke-dasharray="18 6"/>
<line x1="745.5" y1="493.5" x2="745.5" y2="689.5" stroke-dasharray="18 6"/>
<line x1="745.5" y1="689.5" x2="918.5" y2="689.5" stroke-dasharray="18 6"/>
<line x1="918.5" y1="689.5" x2="918.5" y2="493.5" stroke-dasharray="18 6"/>
<path d="M285.5,556 L285.5,528.5 L661.5,528.5"/>
<path d="M661.5,516.5 L661.5,539.5"/>
<path d="M667.5,516.5 L667.5,539.5"/>
<path d="M667.5,528.5 L883.5,528.5 L883.5,565.5"/>
<rect x="637.5" y="525.0" width="7" height="7" fill="#fff" stroke="none"/>
<rect x="684.5" y="525.0" width="7" height="7" fill="#fff" stroke="none"/>
<rect x="753.0" y="525.0" width="7" height="7" fill="#fff" stroke="none"/>
<circle cx="285.5" cy="578.5" r="22.3"/>
<path d="M279.5,565.5 L291.5,565.5"/>
<path d="M285.5,559.5 L285.5,571.5"/>
<path d="M279.5,594.5 L291.5,594.5"/>
<path d="M285.5,600.8 L285.5,700.5"/>
<rect x="282.0" y="651.0" width="7" height="7" fill="#fff" stroke="none"/>
<path d="M272,700.5 L299,700.5 L285.5,713.5 Z"/>
<path d="M285.5,654.5 L472.5,654.5 L488,641.8"/>
<circle cx="489" cy="640" r="2.4"/>
<circle cx="497.5" cy="654.5" r="2.4"/>
<path d="M500,654.5 L687.5,654.5 L687.5,631.5"/>
<rect x="420.0" y="651.0" width="7" height="7" fill="#fff" stroke="none"/>
<rect x="546.0" y="651.0" width="7" height="7" fill="#fff" stroke="none"/>
<rect x="637.5" y="651.0" width="7" height="7" fill="#fff" stroke="none"/>
<path d="M423.5,654.5 L423.5,574.5 L489.5,574.5"/>
<path d="M489.5,561.5 L489.5,585.5"/>
<path d="M495.5,561.5 L495.5,585.5"/>
<path d="M495.5,574.5 L549.5,574.5 L549.5,654.5"/>
<circle cx="486" cy="653.8" r="22.4"/>
<path d="M472.6,671.8 Q469.6,674 469.6,677.7 L469.6,700.5 L457.5,700.5 L457.5,746.5"/>
<path d="M499.9,671.8 Q503.3,674 503.3,677.7 L503.3,700.5 L515.5,700.5 L515.5,746.5 L508.2,746.5"/>
<path d="M474.5,683 L474.5,690"/>
<path d="M495,686.5 L501,686.5"/>
<path d="M497.8,683 L497.8,690"/>
<circle cx="486" cy="745.8" r="22.2"/>
<path d="M446.7,746.5 L463.8,746.5"/>
<rect x="454.0" y="743.0" width="7" height="7" fill="#fff" stroke="none"/>
<path d="M446.7,733.8 L446.7,759.6 L433.4,746.5 Z"/>
<path d="M472.5,741.5 L472.5,752.5"/>
<path d="M495,746.5 L506,746.5"/>
<path d="M500.5,741 L500.5,752"/>
<path d="M641.5,528.5 L641.5,574.3"/>
<path d="M641.5,631.8 L641.5,654.5"/>
<path d="M641.50,574.30 L639.23,573.95 L637.94,574.36 L636.70,574.93 L635.55,575.65 L634.48,576.50 L633.53,577.47 L632.71,578.55 L632.02,579.72 L631.48,580.96 L631.09,582.26 L630.86,583.60 L630.80,584.96 L630.90,586.32 L631.17,587.65 L631.59,588.94 L632.17,590.17 L632.89,591.32 L633.75,592.37 L634.73,593.32 L635.81,594.14 L636.99,594.82 L638.24,595.35 L639.54,595.73 L640.89,595.94 L642.24,596.00 L643.60,595.89 L644.93,595.61 L646.21,595.18 L647.44,594.59 L648.59,593.86 L649.63,592.99 L649.63,595.01 L648.28,593.93 L646.78,593.07 L645.16,592.45 L643.46,592.10 L641.74,592.00 L640.01,592.18 L638.34,592.62 L636.75,593.31 L635.29,594.23 L633.99,595.37 L632.88,596.70 L631.98,598.19 L631.33,599.79 L630.93,601.47 L630.80,603.20 L630.93,604.93 L631.33,606.61 L631.98,608.21 L632.88,609.70 L633.99,611.03 L635.29,612.17 L636.75,613.09 L638.34,613.78 L640.01,614.22 L641.74,614.40 L643.46,614.30 L645.16,613.95 L646.78,613.33 L648.28,612.47 L649.63,611.39 L649.63,613.21 L648.59,612.34 L647.44,611.61 L646.21,611.02 L644.93,610.59 L643.60,610.31 L642.24,610.20 L640.89,610.26 L639.54,610.47 L638.24,610.85 L636.99,611.38 L635.81,612.06 L634.73,612.88 L633.75,613.83 L632.89,614.88 L632.17,616.03 L631.59,617.26 L631.17,618.55 L630.90,619.88 L630.80,621.24 L630.86,622.60 L631.09,623.94 L631.48,625.24 L632.02,626.48 L632.71,627.65 L633.53,628.73 L634.48,629.70 L635.55,630.55 L636.70,631.27 L637.94,631.84 L639.23,632.25 L641.50,631.80"/>
<path d="M687.5,528.5 L687.5,574.3"/>
<path d="M687.5,631.8 L687.5,654.5"/>
<path d="M687.50,574.30 L689.77,573.95 L691.06,574.36 L692.30,574.93 L693.45,575.65 L694.52,576.50 L695.47,577.47 L696.29,578.55 L696.98,579.72 L697.52,580.96 L697.91,582.26 L698.14,583.60 L698.20,584.96 L698.10,586.32 L697.83,587.65 L697.41,588.94 L696.83,590.17 L696.11,591.32 L695.25,592.37 L694.27,593.32 L693.19,594.14 L692.01,594.82 L690.76,595.35 L689.46,595.73 L688.11,595.94 L686.76,596.00 L685.40,595.89 L684.07,595.61 L682.79,595.18 L681.56,594.59 L680.41,593.86 L679.37,592.99 L679.37,595.01 L680.72,593.93 L682.22,593.07 L683.84,592.45 L685.54,592.10 L687.26,592.00 L688.99,592.18 L690.66,592.62 L692.25,593.31 L693.71,594.23 L695.01,595.37 L696.12,596.70 L697.02,598.19 L697.67,599.79 L698.07,601.47 L698.20,603.20 L698.07,604.93 L697.67,606.61 L697.02,608.21 L696.12,609.70 L695.01,611.03 L693.71,612.17 L692.25,613.09 L690.66,613.78 L688.99,614.22 L687.26,614.40 L685.54,614.30 L683.84,613.95 L682.22,613.33 L680.72,612.47 L679.37,611.39 L679.37,613.21 L680.41,612.34 L681.56,611.61 L682.79,611.02 L684.07,610.59 L685.40,610.31 L686.76,610.20 L688.11,610.26 L689.46,610.47 L690.76,610.85 L692.01,611.38 L693.19,612.06 L694.27,612.88 L695.25,613.83 L696.11,614.88 L696.83,616.03 L697.41,617.26 L697.83,618.55 L698.10,619.88 L698.20,621.24 L698.14,622.60 L697.91,623.94 L697.52,625.24 L696.98,626.48 L696.29,627.65 L695.47,628.73 L694.52,629.70 L693.45,630.55 L692.30,631.27 L691.06,631.84 L689.77,632.25 L687.50,631.80"/>
<circle cx="647" cy="623" r="2.3"/>
<circle cx="682" cy="582" r="2.3"/>
<line x1="653.5" y1="573.8" x2="653.5" y2="631.8" stroke-dasharray="18 6"/>
<line x1="664.5" y1="573.8" x2="664.5" y2="631.8" stroke-dasharray="18 6"/>
<line x1="676.5" y1="573.8" x2="676.5" y2="631.8" stroke-dasharray="18 6"/>
<path d="M756.5,528.5 L756.5,562.5 L762.7,562.5 L768.2,552 L779.4,574.5 L791.1,552 L802.8,574.5 L808.3,562.5 L860.8,562.5"/>
<path d="M860.8,562.5 Q863,563 864.5,566"/>
<rect x="822.0" y="559.0" width="7" height="7" fill="#fff" stroke="none"/>
<path d="M825.5,562.5 L825.5,594.3"/>
<path d="M813.5,594.5 L838.5,594.5"/>
<path d="M813.5,600.5 L838.5,600.5"/>
<path d="M825.5,600.5 L825.5,631.5 L883.5,631.5"/>
<path d="M849,568.5 L855,568.5"/>
<path d="M851.5,564.5 L851.5,572"/>
<path d="M849,591.5 L855,591.5"/>
<circle cx="883" cy="579" r="22.6"/>
<circle cx="883.3" cy="567.8" r="2.3"/>
<circle cx="897.4" cy="576.6" r="2.3"/>
<path d="M895.8,578.6 L883.7,594 L883.7,631.5 L883.7,666.2"/>
<path d="M865.4,594.9 Q862,597.6 849.8,597.6 L849.5,631.5"/>
<rect x="846.0" y="628.0" width="7" height="7" fill="#fff" stroke="none"/>
<rect x="880.0" y="628.0" width="7" height="7" fill="#fff" stroke="none"/>
<path d="M870,666.2 L897,666.2 L883.5,680 Z"/>
</g>
</svg>
</body></html>
